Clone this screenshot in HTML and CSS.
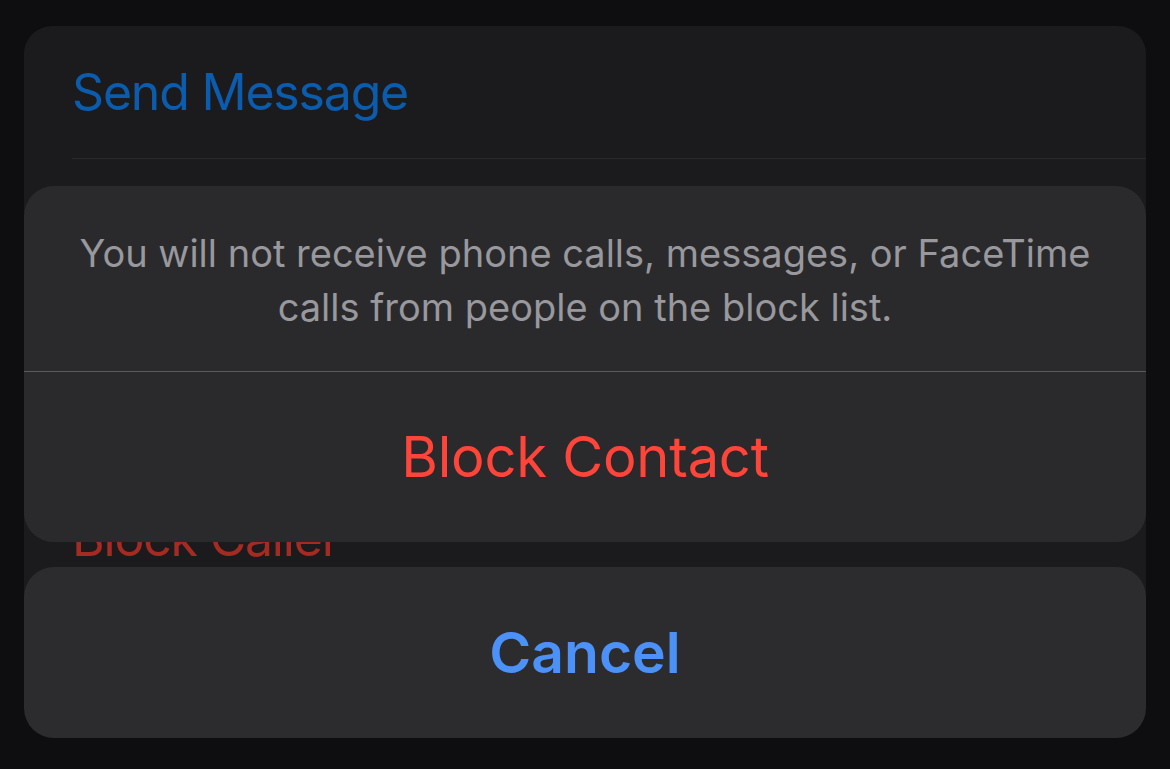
FILE: index.html
```html
<!DOCTYPE html>
<html lang="en">
<head>
    <meta charset="UTF-8">
    <meta name="viewport" content="width=device-width, initial-scale=1.0">
    <title>Block Contact</title>
    <link rel="stylesheet" href="styles.css">
</head>
<body>
    <div class="screen">
        <div class="list">
            <div class="row row-first"><span class="link">Send Message</span></div>
            <div class="row-spacer"></div>
            <div class="row"><span class="danger">Block Caller</span></div>
        </div>

        <div class="sheet">
            <div class="sheet-group">
                <p class="sheet-message">You will not receive phone calls, messages, or FaceTime calls from people on the block list.</p>
                <button class="sheet-action destructive">Block Contact</button>
            </div>
            <button class="sheet-action cancel">Cancel</button>
        </div>
    </div>
</body>
</html>
```

FILE: styles.css
```css
html, body {
    margin: 0;
    height: 100%;
}
body {
    background-color: #0e0e10;
    font-family: Inter, "Noto Sans", sans-serif;
    overflow: hidden;
}
.screen {
    position: relative;
    height: 769px;
    padding: 26px 24px 0;
    box-sizing: border-box;
}
.list {
    background-color: #1b1b1d;
    border-radius: 28px;
    height: 690px;
    overflow: hidden;
}
.row {
    height: 132px;
    margin-left: 48px;
    display: flex;
    align-items: center;
    font-size: 50px;
    letter-spacing: -1.2px;
}
.row-first {
    border-bottom: 1px solid #2a2a2c;
}
.row-spacer {
    height: 313px;
}
.link {
    color: #0b5cad;
}
.danger {
    color: #a52a22;
}

/* action sheet sits over the list */
.sheet {
    position: absolute;
    left: 24px;
    right: 24px;
    top: 186px;
    display: flex;
    flex-direction: column;
    gap: 25px;
}
.sheet-group {
    background-color: #2a2a2c;
    border-radius: 30px;
    overflow: hidden;
}
.sheet-message {
    margin: 0;
    height: 186px;
    box-sizing: border-box;
    padding: 40px 36px 0;
    border-bottom: 1px solid #5a5a5e;
    text-align: center;
    color: #98989d;
    font-size: 38px;
    letter-spacing: 0;
    line-height: 54px;
}
.sheet-action {
    display: block;
    width: 100%;
    height: 170px;
    border: none;
    background-color: #2a2a2c;
    font-family: inherit;
    font-size: 56px;
    letter-spacing: -0.2px;
    padding: 0;
    cursor: pointer;
}
.destructive {
    color: #ff453a;
}
.cancel {
    height: 171px;
    border-radius: 30px;
    background-color: #2c2c2e;
    color: #4b91f7;
    font-weight: 600;
    font-size: 57px;
    letter-spacing: 0;
}
```
